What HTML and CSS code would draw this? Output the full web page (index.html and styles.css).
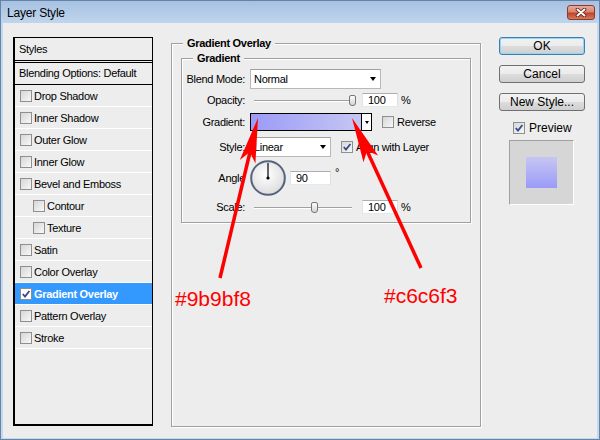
FILE: index.html
```html
<!DOCTYPE html>
<html lang="en">
<head>
    <meta charset="UTF-8">
    <title>Layer Style</title>
    <link rel="stylesheet" href="styles.css">
</head>
<body>
<div class="window">
    <div class="titlebar">
        <span class="title">Layer Style</span>
        <span class="close-btn">
            <svg width="14" height="9" viewBox="0 0 14 9">
                <path d="M3.5 1.5 L10.5 7.5 M10.5 1.5 L3.5 7.5" stroke="#5a1a10" stroke-width="3.6" stroke-linecap="round"/>
                <path d="M3.5 1.5 L10.5 7.5 M10.5 1.5 L3.5 7.5" stroke="#fff" stroke-width="2" stroke-linecap="round"/>
            </svg>
        </span>
    </div>
    <div class="client">
        <div class="styles-list">
            <div class="list-head">Styles</div>
            <div class="list-blend">Blending Options: Default</div>
            <div class="list-item"><span class="cb"></span>Drop Shadow</div>
            <div class="list-item"><span class="cb"></span>Inner Shadow</div>
            <div class="list-item"><span class="cb"></span>Outer Glow</div>
            <div class="list-item"><span class="cb"></span>Inner Glow</div>
            <div class="list-item"><span class="cb"></span>Bevel and Emboss</div>
            <div class="list-item sub"><span class="cb"></span>Contour</div>
            <div class="list-item sub"><span class="cb"></span>Texture</div>
            <div class="list-item"><span class="cb"></span>Satin</div>
            <div class="list-item"><span class="cb"></span>Color Overlay</div>
            <div class="list-item selected">
                <span class="cb"><svg width="10" height="10" viewBox="0 0 10 10"><path d="M1.8 5 L4 7.6 L8.4 2" fill="none" stroke="#344a8c" stroke-width="1.8"/></svg></span>Gradient Overlay
            </div>
            <div class="list-item"><span class="cb"></span>Pattern Overlay</div>
            <div class="list-item"><span class="cb"></span>Stroke</div>
        </div>

        <div class="group group-outer">
            <div class="group-title">Gradient Overlay</div>
            <div class="group group-inner">
                <div class="group-title">Gradient</div>

                <div class="row row-blend">
                    <span class="lbl">Blend Mode:</span>
                    <div class="select select-blend">Normal<span class="tri"></span></div>
                </div>

                <div class="row row-opacity">
                    <span class="lbl">Opacity:</span>
                    <div class="slider"><div class="track"></div><div class="thumb" style="left:95px"></div></div>
                    <div class="field field-num">100</div>
                    <span class="unit">%</span>
                </div>

                <div class="row row-grad">
                    <span class="lbl">Gradient:</span>
                    <div class="grad">
                        <div class="grad-fill"></div>
                        <div class="grad-drop"><span class="tri tri-small"></span></div>
                    </div>
                    <span class="cb cb-side"></span><span class="cb-text">Reverse</span>
                </div>

                <div class="row row-style">
                    <span class="lbl">Style:</span>
                    <div class="select select-style">Linear<span class="tri"></span></div>
                    <span class="cb cb-side"><svg width="10" height="10" viewBox="0 0 10 10"><path d="M1.8 5 L4 7.6 L8.4 2" fill="none" stroke="#344a8c" stroke-width="1.8"/></svg></span><span class="cb-text">Align with Layer</span>
                </div>

                <div class="row row-angle">
                    <span class="lbl">Angle</span>
                    <svg class="dial" width="36" height="36" viewBox="0 0 36 36">
                        <defs>
                            <radialGradient id="dialFill" cx="45%" cy="40%" r="65%">
                                <stop offset="0" stop-color="#ffffff"/>
                                <stop offset="1" stop-color="#dadada"/>
                            </radialGradient>
                        </defs>
                        <circle cx="18" cy="18" r="16.8" fill="url(#dialFill)" stroke="#56637f" stroke-width="2"/>
                        <line x1="18" y1="3" x2="18" y2="18" stroke="#000" stroke-width="1.2"/>
                        <circle cx="18" cy="18" r="1.6" fill="#000"/>
                    </svg>
                    <div class="field field-angle">90</div>
                    <span class="degree">°</span>
                </div>

                <div class="row row-scale">
                    <span class="lbl">Scale:</span>
                    <div class="slider"><div class="track"></div><div class="thumb" style="left:57px"></div></div>
                    <div class="field field-num">100</div>
                    <span class="unit">%</span>
                </div>
            </div>
        </div>

        <div class="actions">
            <div class="btn btn-default">OK</div>
            <div class="btn">Cancel</div>
            <div class="btn">New Style...</div>
            <div class="preview-toggle">
                <span class="cb"><svg width="10" height="10" viewBox="0 0 10 10"><path d="M1.8 5 L4 7.6 L8.4 2" fill="none" stroke="#344a8c" stroke-width="1.8"/></svg></span>
                <span>Preview</span>
            </div>
            <div class="preview-box"><div class="swatch"></div></div>
        </div>
    </div>
</div>

<!-- annotation arrows drawn over the dialog -->
<svg class="marks" width="600" height="440" viewBox="0 0 600 440">
    <line x1="220" y1="278" x2="250" y2="152" stroke="#ff0000" stroke-width="3.5"/>
    <polygon points="258,118 255.4,163.6 249.9,152.1 239.8,160" fill="#ff0000"/>
    <line x1="421" y1="268" x2="367" y2="150.7" stroke="#ff0000" stroke-width="3.5"/>
    <polygon points="352,118 378.1,155.6 367,150.7 363.5,162.2" fill="#ff0000"/>
</svg>
<span class="note note-left">#9b9bf8</span>
<span class="note note-right">#c6c6f3</span>
</body>
</html>
```

FILE: styles.css
```css
body {
    margin: 0;
    font-family: "Liberation Sans", Arial, sans-serif;
    font-size: 11px;
    letter-spacing: -0.3px;
    color: #000;
    background: #fff;
}

.window {
    width: 600px;
    height: 440px;
    box-sizing: border-box;
    border: 1px solid #6584aa;
    background: #c4d8ee;
    display: flex;
    flex-direction: column;
}

.titlebar {
    height: 22px;
    flex-shrink: 0;
    display: flex;
    justify-content: space-between;
    align-items: flex-start;
    padding: 0 4px 0 6px;
    background: linear-gradient(to bottom, #a6c1e1, #c0d5ed);
}

.title {
    font-size: 12px;
    line-height: 14px;
    margin-top: 5px;
    letter-spacing: -0.2px;
}

.close-btn {
    width: 28px;
    height: 15px;
    margin-top: 4px;
    box-sizing: border-box;
    border: 1px solid #8c3a2c;
    border-radius: 3px;
    background: linear-gradient(to bottom, #e9a99b 0%, #d88571 45%, #c1432c 55%, #d47a5e 100%);
    display: flex;
    align-items: center;
    justify-content: center;
}

.client {
    flex: 1;
    margin: 0 2px 1px;
    background: #ededed;
    display: flex;
    align-items: flex-start;
    padding: 14px 0 0 10px;
}

/* left style list */
.styles-list {
    width: 140px;
    height: 389px;
    box-sizing: border-box;
    border: 1px solid #000;
    border-left-width: 2px;
    border-bottom-width: 2px;
}

.list-head {
    height: 22px;
    line-height: 22px;
    padding-left: 4px;
    border-bottom: 3px double #000;
}

.list-blend {
    height: 21px;
    line-height: 21px;
    padding-left: 4px;
    border-bottom: 1px solid #000;
}

.list-item {
    height: 21px;
    display: flex;
    align-items: center;
    padding-left: 5px;
    border-bottom: 1px solid #fff;
}

.list-item.sub {
    padding-left: 18px;
}

.list-item.selected {
    background: #3399ff;
    color: #fff;
    font-weight: bold;
}

.cb {
    width: 12px;
    height: 12px;
    box-sizing: border-box;
    flex-shrink: 0;
    border: 1px solid #8e8f8f;
    background: linear-gradient(135deg, #d6d6d6, #f8f8f8);
    margin-right: 2px;
    display: flex;
    align-items: center;
    justify-content: center;
}

.selected .cb {
    background: #fff;
}

/* group boxes */
.group {
    box-sizing: border-box;
    border: 1px solid #a0a0a0;
    box-shadow: 1px 1px 0 #fff, inset 1px 1px 0 #fff;
}

.group-outer {
    width: 310px;
    height: 384px;
    margin: 6px 0 0 18px;
    padding: 0 9px;
}

.group-title {
    width: fit-content;
    margin: -7px 0 0 2px;
    padding: 0 4px;
    background: #ededed;
    font-weight: bold;
    line-height: 13px;
}

.group-inner {
    margin-top: 8px;
    padding-bottom: 8px;
}

.group-inner > .group-title {
    margin-left: 11px;
}

.row {
    display: flex;
    align-items: center;
}

.row-blend { height: 20px; margin-top: 4px; }
.row-opacity { height: 14px; margin-top: 4px; }
.row-grad { height: 18px; margin-top: 6px; }
.row-style { height: 20px; margin-top: 6px; }
.row-angle { height: 36px; margin-top: 3px; }
.row-scale { height: 14px; margin-top: 4px; }

.lbl {
    width: 63px;
    margin-right: 5px;
    text-align: right;
    flex-shrink: 0;
}

.select {
    height: 20px;
    box-sizing: border-box;
    border: 1px solid #b8b8b8;
    border-top-color: #a0a0a0;
    background: #fff;
    display: flex;
    align-items: center;
    justify-content: space-between;
    padding: 0 4px 0 3px;
}

.select-blend { width: 131px; }
.select-style { width: 81px; }

.tri {
    width: 0;
    height: 0;
    border-left: 3.5px solid transparent;
    border-right: 3.5px solid transparent;
    border-top: 4px solid #000;
}

.tri-small {
    border-left-width: 2.5px;
    border-right-width: 2.5px;
    border-top-width: 3px;
}

.slider {
    position: relative;
    width: 102px;
    height: 14px;
    margin-left: 4px;
}

.track {
    margin-top: 7px;
    width: 98px;
    height: 1px;
    background: #a0a0a0;
    border-bottom: 1px solid #fff;
}

.thumb {
    position: absolute;
    top: 2px;
    width: 7px;
    height: 11px;
    box-sizing: border-box;
    border: 1px solid #777;
    border-radius: 2px 2px 3px 3px;
    background: linear-gradient(#fdfdfd, #d4d4d4);
}

.field {
    height: 14px;
    box-sizing: border-box;
    border: 1px solid;
    border-color: #abadb3 #dbdfe6 #e3e9ef #e2e3ea;
    background: #fff;
    padding-left: 5px;
    line-height: 12px;
}

.field-num { width: 36px; margin-left: 6px; }
.field-angle { width: 41px; margin-left: 4px; }

.unit { margin-left: 3px; }

.degree {
    align-self: flex-start;
    margin: 6px 0 0 4px;
}

.grad {
    width: 122px;
    height: 18px;
    box-sizing: border-box;
    border: 1px solid #000;
    display: flex;
}

.grad-fill {
    flex: 1;
    background: linear-gradient(to right, #9b9bf8, #c6c6f3);
}

.grad-drop {
    width: 9px;
    border-left: 1px solid #000;
    background: #fff;
    display: flex;
    align-items: center;
    justify-content: center;
}

.cb-side {
    margin-left: 10px;
    margin-right: 3px;
}

/* right column */
.actions {
    width: 86px;
    margin-left: 18px;
    display: flex;
    flex-direction: column;
    font-size: 12px;
    letter-spacing: 0;
}

.btn {
    height: 18px;
    box-sizing: border-box;
    border: 1px solid #707070;
    border-radius: 3px;
    background: linear-gradient(#f2f2f2 0%, #ebebeb 50%, #dddddd 50%, #cfcfcf 100%);
    text-align: center;
    line-height: 16px;
    margin-bottom: 10px;
}

.btn-default {
    border-color: #3c7fb1;
    box-shadow: inset 0 0 0 1px #92d5f6;
}

.preview-toggle {
    display: flex;
    align-items: center;
    height: 12px;
    margin: 1px 0 0 14px;
}

.preview-toggle .cb {
    margin-right: 4px;
}

.preview-box {
    width: 65px;
    height: 65px;
    box-sizing: border-box;
    margin: 6px 0 0 10px;
    border: 1px solid;
    border-color: #a0a0a0 #fff #fff #a0a0a0;
    background: #d6d6d6;
    display: flex;
    align-items: center;
    justify-content: center;
}

.swatch {
    width: 31px;
    height: 31px;
    background: linear-gradient(#c6c6f3, #9b9bf8);
}

/* red annotations */
.marks {
    position: absolute;
    left: 0;
    top: 0;
    pointer-events: none;
}

.note {
    position: absolute;
    font-size: 21px;
    line-height: 21px;
    letter-spacing: 0;
    color: #ff0000;
}

.note-left { left: 175px; top: 288px; }
.note-right { left: 384px; top: 285px; }
```
